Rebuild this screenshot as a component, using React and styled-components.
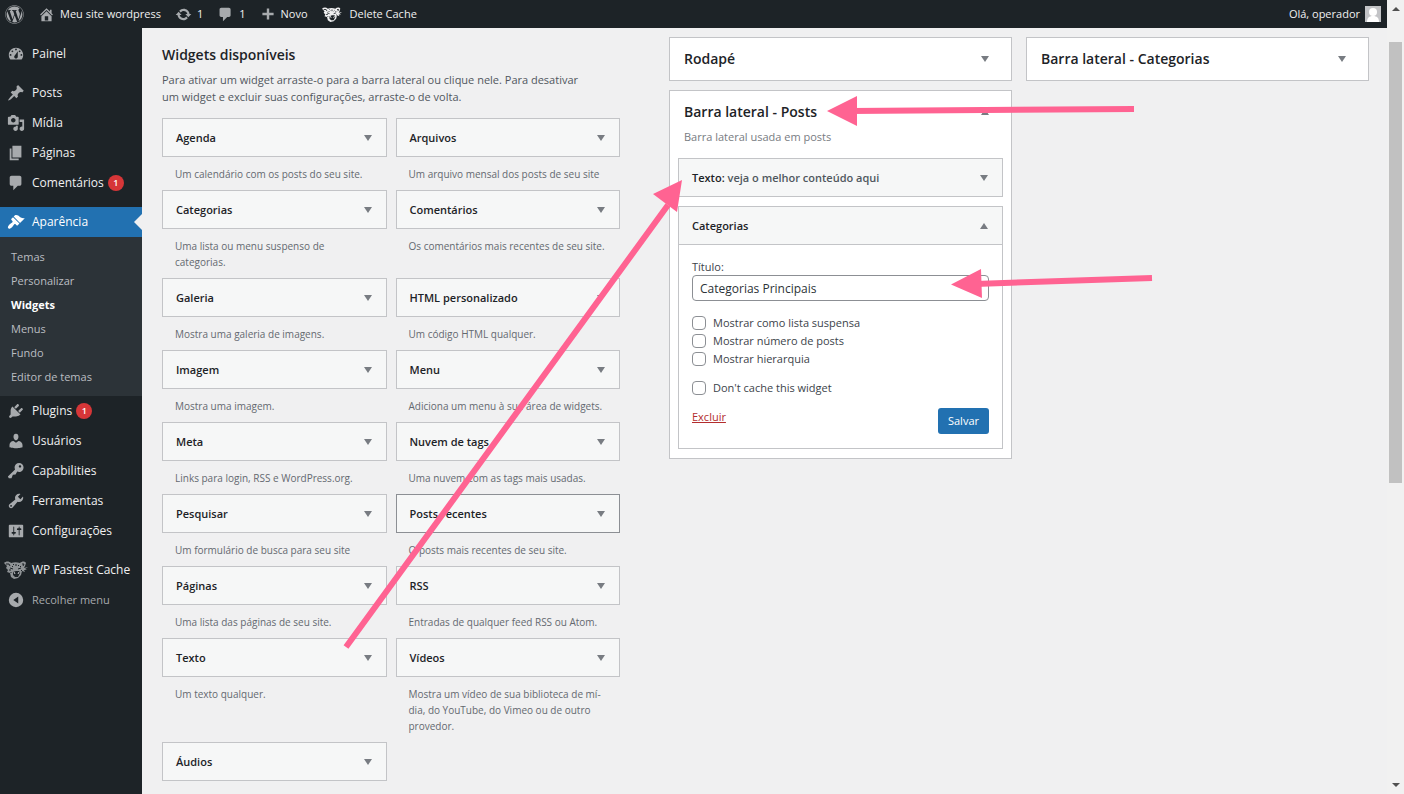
import React, { useState } from 'react';
import styled, { createGlobalStyle, css } from 'styled-components';
import { FaWordpress } from 'react-icons/fa';

const GlobalStyle = createGlobalStyle`
  * {
    box-sizing: border-box;
  }
  body {
    margin: 0;
    background: #f0f0f1;
    color: #3c434a;
    font-family: 'Open Sans', 'Noto Sans', sans-serif;
    font-size: 12px;
    line-height: 16px;
  }
  h2, h3, p, ul {
    margin: 0;
    padding: 0;
  }
  ul {
    list-style: none;
  }
  a {
    color: inherit;
    text-decoration: none;
  }
  button, input {
    font: inherit;
  }
`;

const paths = {
  home: 'M16 8.5l1.53 1.53-1.06 1.06L10 4.6l-6.47 6.49-1.06-1.06L10 2.5l4 4v-2h2v4zm-6-2.46l6 5.99V18H4v-5.97zM12 17v-5H8v5h4z',
  update: 'M10.2 3.28c3.53 0 6.43 2.61 6.92 6h2.08l-3.5 4-3.5-4h2.32c-.45-1.97-2.21-3.45-4.32-3.45-1.45 0-2.73.71-3.54 1.78L4.95 5.66C6.23 4.2 8.11 3.28 10.2 3.28zm-.4 13.44c-3.52 0-6.43-2.61-6.92-6H.8l3.5-4c1.17 1.33 2.33 2.67 3.5 4H5.48c.45 1.97 2.21 3.45 4.32 3.45 1.45 0 2.73-.71 3.54-1.78l1.71 1.95c-1.28 1.46-3.15 2.38-5.25 2.38z',
  comments: 'M5 2h9c1.1 0 2 .9 2 2v7c0 1.1-.9 2-2 2h-2l-5 5v-5H5c-1.1 0-2-.9-2-2V4c0-1.1.9-2 2-2z',
  plus: 'M17 8.500v3h-5.500v5.500h-3v-5.500H3v-3h5.500V3h3v5.500z',
  dashboard: 'M3.76 16h12.48c1.1-1.37 1.76-3.11 1.76-5 0-4.42-3.58-8-8-8s-8 3.58-8 8c0 1.89.66 3.63 1.76 5zM10 4c.55 0 1 .45 1 1s-.45 1-1 1-1-.45-1-1 .45-1 1-1zM6 6c.55 0 1 .45 1 1s-.45 1-1 1-1-.45-1-1 .45-1 1-1zm8 0c.55 0 1 .45 1 1s-.45 1-1 1-1-.45-1-1 .45-1 1-1zm-5.37 5.55L12 7v6c0 1.1-.9 2-2 2s-2-.9-2-2c0-.57.24-1.08.63-1.45zM4 10c.55 0 1 .45 1 1s-.45 1-1 1-1-.45-1-1 .45-1 1-1zm12 0c.55 0 1 .45 1 1s-.45 1-1 1-1-.45-1-1 .45-1 1-1z',
  pin: 'M10.44 3.02l1.82-1.82 6.36 6.35-1.83 1.82c-1.05-.68-2.48-.57-3.41.36l-.75.75c-.92.93-1.04 2.35-.35 3.41l-1.83 1.82-2.41-2.41-2.8 2.79c-.42.42-3.38 2.71-3.8 2.29s1.86-3.39 2.28-3.81l2.79-2.79L4.1 9.36l1.83-1.82c1.05.69 2.48.57 3.4-.36l.75-.75c.93-.92 1.05-2.35.36-3.41z',
  media: 'M13 11V4c0-.55-.45-1-1-1h-1.67L9 1H5L3.67 3H2c-.55 0-1 .45-1 1v7c0 .55.45 1 1 1h10c.55 0 1-.45 1-1zM7 4.5c1.38 0 2.5 1.12 2.5 2.5S8.38 9.5 7 9.5 4.5 8.38 4.5 7 5.62 4.5 7 4.5zM14 6h5v10.5c0 1.38-1.12 2.5-2.5 2.5S14 17.88 14 16.5s1.12-2.5 2.5-2.5c.17 0 .34.02.5.05V9h-3V6zm-4 8.05V13h2v3.5c0 1.38-1.12 2.5-2.5 2.5S7 17.88 7 16.5 8.12 14 9.5 14c.17 0 .34.02.5.05z',
  page: 'M6 15V2h10v13H6zm-1 1h8v2H3V5h2v11z',
  brush: 'M14.48 11.06L7.41 3.99l1.5-1.5c.5-.56 2.3-.47 3.51.32 1.21.8 1.43 1.28 2.91 2.1 1.18.64 2.45 1.26 4.45.85zm-.71.71L6.7 4.7 4.93 6.47c-.39.39-.39 1.02 0 1.41l1.06 1.06c.39.39.39 1.03 0 1.42-.6.6-1.43 1.11-2.21 1.69-.35.26-.7.53-1.01.84C1.43 14.23.4 16.08 1.4 17.07c.99 1 2.84-.03 4.18-1.36.31-.31.58-.66.85-1.02.57-.78 1.08-1.61 1.69-2.21.39-.39 1.02-.39 1.41 0l1.06 1.06c.39.39 1.02.39 1.41 0z',
  plug: 'M13.11 4.36L9.87 7.6 8 5.73l3.24-3.24c.35-.34 1.05-.2 1.56.32.52.51.66 1.21.31 1.55zm-8 1.77l.91-1.12 9.01 9.01-1.19.84c-.71.71-2.63 1.16-3.82 1.16H6.14L4.9 17.26c-.59.59-1.54.59-2.12 0-.59-.58-.59-1.53 0-2.12l1.24-1.24v-3.88c0-1.13.4-3.19 1.09-3.89zm7.26 3.97l3.24-3.24c.34-.35 1.04-.21 1.55.31.52.51.66 1.21.31 1.55l-3.24 3.25z',
  user: 'M10 9.25c-2.27 0-2.73-3.44-2.73-3.44C7 4.02 7.82 2 9.97 2c2.16 0 2.98 2.02 2.71 3.81 0 0-.41 3.44-2.68 3.44zm0 2.57L12.72 10c2.39 0 4.52 2.33 4.52 4.53v2.49s-3.65 1.13-7.24 1.13c-3.65 0-7.24-1.13-7.24-1.13v-2.49c0-2.25 1.94-4.48 4.47-4.48z',
  key: 'M16.95 2.58c1.96 1.95 1.96 5.12 0 7.07-1.51 1.51-3.75 1.84-5.59 1.01l-1.87 3.31-2.99.31L5 18H2l-1-2 7.95-7.69c-.92-1.87-.62-4.18.93-5.73 1.95-1.96 5.12-1.96 7.07 0zm-2.51 3.79c.74 0 1.33-.6 1.33-1.34 0-.73-.59-1.33-1.33-1.33-.73 0-1.33.6-1.33 1.33 0 .74.6 1.34 1.33 1.34z',
  wrench: 'M16.68 9.77c-1.34 1.34-3.3 1.67-4.95.99l-5.41 6.52c-.99.99-2.59.99-3.58 0s-.99-2.59 0-3.57l6.52-5.42c-.68-1.65-.35-3.61.99-4.95 1.28-1.28 3.12-1.62 4.72-1.06l-2.89 2.89 2.82 2.82 2.86-2.87c.53 1.58.18 3.39-1.08 4.65zM3.81 16.21c.4.39 1.04.39 1.43 0 .4-.4.4-1.04 0-1.43-.39-.4-1.03-.4-1.43 0-.39.39-.39 1.03 0 1.43z',
  settings: 'M18 16V4c0-.55-.45-1-1-1H3c-.55 0-1 .45-1 1v12c0 .55.45 1 1 1h14c.55 0 1-.45 1-1zM8 11h1c.55 0 1 .45 1 1s-.45 1-1 1H8v1.5c0 .28-.22.5-.5.5s-.5-.22-.5-.5V13H6c-.55 0-1-.45-1-1s.45-1 1-1h1V5.5c0-.28.22-.5.5-.5s.5.22.5.5V11zm5-2h-1c-.55 0-1-.45-1-1s.45-1 1-1h1V5.5c0-.28.22-.5.5-.5s.5.22.5.5V7h1c.55 0 1 .45 1 1s-.45 1-1 1h-1v5.5c0 .28-.22.5-.5.5s-.5-.22-.5-.5V9z',
  collapse: 'M10 2a8 8 0 1 0 0 16a8 8 0 1 0 0-16zM12.500 6v8L7 10z',
};

const Icon = ({ name, size = 18 }) => (
  <svg width={size} height={size} viewBox="0 0 20 20" fill="currentColor" fillRule="evenodd" aria-hidden="true">
    <path d={paths[name]} />
  </svg>
);

const Cheetah = ({ width = 24, bright }) => (
  <svg width={width} height={(width * 18) / 24} viewBox="0 0 24 18" aria-hidden="true">
    <path
      d="M0 2C2 0 5 0 7 2c3-1 6-1 9 0 2-2 5-2 6 0l-1 3-1 2 4-1-3 2 2 1-3 0 1 2-3-1-1 4-3 3-4 1-3-2-1-4-3-1 1-2-2-2 1-2z"
      fill={bright ? '#f0f0f1' : '#8f9396'}
    />
    <path d="M9 11l3-1 3 0 1 2-2 4-3 0-2-2z" fill="#1d2327" />
    <path d="M10 11l1 2M15 11l-1 2" stroke={bright ? '#fff' : '#c3c4c7'} strokeWidth="1" />
    <path
      d="M2 3l3 0 1 2M18 3l2 0-1 2M9 3l1 1M12 3v2M15 4l-1 1M6 7l3 1M14 8l3-1M5 9l2 0M7 11l0 1M18 9l-1 1M8 5l1 1M16 6l1-1"
      stroke="#1d2327"
      strokeWidth="1"
      fill="none"
    />
  </svg>
);

const Window = styled.div`
  position: relative;
  display: flex;
  height: 100vh;
  overflow: hidden;
`;

const Screen = styled.div`
  flex: 1;
  min-width: 0;
  display: flex;
  flex-direction: column;
`;

const TopBar = styled.header`
  flex: none;
  display: flex;
  align-items: center;
  height: 28px;
  padding: 0 6px 0 5px;
  background: #1d2327;
  color: #f0f0f1;
  font-size: 11px;
`;

const TopLink = styled.a`
  display: flex;
  align-items: center;
  gap: ${props => props.$gap || 5}px;
  margin-right: 14px;
  white-space: nowrap;

  svg {
    color: #a7aaad;
  }
`;

const Account = styled(TopLink)`
  margin: 0 0 0 auto;
`;

const Avatar = styled.svg`
  display: block;
  background: #c3c4c7;
`;

const Body = styled.div`
  flex: 1;
  min-height: 0;
  display: flex;
`;

const Sidebar = styled.nav`
  flex: none;
  width: 142px;
  padding-top: 11px;
  background: #1d2327;
  color: #f0f0f1;
`;

const MenuLink = styled.a`
  position: relative;
  display: flex;
  align-items: center;
  gap: 7px;
  height: 30px;
  margin-top: ${props => (props.$spaced ? 9 : 0)}px;
  padding-left: 7px;
  font-size: 12px;
  white-space: nowrap;

  svg {
    flex: none;
    color: #a7aaad;
  }

  ${props => props.$active && css`
    background: #2271b1;
    color: #fff;

    svg {
      color: #fff;
    }

    &::after {
      content: '';
      position: absolute;
      right: 0;
      top: 7px;
      border: 8px solid transparent;
      border-left: 0;
      border-right-color: #f0f0f1;
    }
  `}

  ${props => props.$muted && css`
    color: #a7aaad;
    font-size: 11px;
  `}

  ${props => props.$wide && css`
    padding-left: 4px;
    gap: 4px;
  `}
`;

const Count = styled.span`
  width: 16px;
  height: 16px;
  margin-left: -3px;
  border-radius: 8px;
  background: #d63638;
  color: #fff;
  font-size: 9px;
  font-weight: 600;
  line-height: 16px;
  text-align: center;
`;

const Submenu = styled.ul`
  padding: 8px 0 7px;
  background: #2c3338;
`;

const SubLink = styled.a`
  display: block;
  padding: 0 11px;
  color: ${props => (props.$current ? '#fff' : '#bbbec2')};
  font-size: 11px;
  font-weight: ${props => (props.$current ? 700 : 400)};
  line-height: 24px;
`;

const Content = styled.main`
  flex: 1;
  min-width: 0;
  display: grid;
  grid-template-columns: minmax(0, 458fr) minmax(0, 700fr);
  align-items: start;
  gap: 49px;
  padding: 9px 18px 0 20px;
`;

const Title = styled.h2`
  margin-top: 8px;
  color: #1d2327;
  font-size: 14px;
  font-weight: 600;
  line-height: 20px;
`;

const Intro = styled.p`
  max-width: 425px;
  margin: 6px 0 13px;
  color: #50575e;
  font-size: 11px;
  line-height: 17px;
`;

const WidgetGrid = styled.div`
  display: grid;
  grid-template-columns: 1fr 1fr;
  column-gap: 9px;
`;

const WidgetHead = styled.button`
  display: flex;
  align-items: center;
  justify-content: space-between;
  width: 100%;
  height: 39px;
  padding: 0 14px 0 13px;
  border: 1px solid ${props => (props.$focus ? '#8c8f94' : '#c3c4c7')};
  background: #f6f7f7;
  color: #1d2327;
  font-size: 11px;
  font-weight: 600;
  text-align: left;
  cursor: pointer;

  span {
    color: #50575e;
  }
`;

const WidgetText = styled.p`
  padding: 9px 13px 8px;
  color: #646970;
  font-size: 10px;
  line-height: 16px;
`;

const Caret = styled.i`
  flex: none;
  border: 4px solid transparent;
  border-top: 6px solid #787c82;
  border-bottom: 0;
  transform: ${props => (props.$open ? 'rotate(180deg)' : 'none')};
`;

const Areas = styled.div`
  display: grid;
  grid-template-columns: 1fr 1fr;
  align-items: start;
  gap: 14px;
`;

const AreaColumn = styled.div`
  display: flex;
  flex-direction: column;
  gap: 9px;
`;

const Area = styled.section`
  padding: 0 8px;
  border: 1px solid #c3c4c7;
  background: #fff;
`;

const AreaHead = styled.button`
  display: flex;
  align-items: center;
  justify-content: space-between;
  width: 100%;
  height: 42px;
  padding: 0 14px 0 6px;
  border: 0;
  background: none;
  color: #1d2327;
  font-size: 14px;
  font-weight: 600;
  cursor: pointer;
`;

const AreaText = styled.p`
  margin-top: -4px;
  padding: 0 6px 13px;
  color: #787c82;
  font-size: 11px;
  line-height: 16px;
`;

const WidgetList = styled.div`
  display: flex;
  flex-direction: column;
  gap: 9px;
  padding-bottom: 9px;
`;

const WidgetForm = styled.form`
  padding: 14px 13px;
  border: 1px solid #c3c4c7;
  border-top: 0;
  font-size: 11px;
`;

const FieldLabel = styled.label`
  display: block;
  line-height: 16px;
`;

const TextInput = styled.input`
  display: block;
  width: 100%;
  height: 26px;
  margin-bottom: 13px;
  padding: 0 7px;
  border: 1px solid #8c8f94;
  border-radius: 4px;
  background: #fff;
  color: #2c3338;
  font-size: 12px;
`;

const CheckLabel = styled.label`
  display: flex;
  align-items: center;
  gap: 7px;
  height: 18px;
  margin-top: ${props => (props.$spaced ? 11 : 0)}px;
`;

const CheckBox = styled.input`
  appearance: none;
  width: 14px;
  height: 14px;
  margin: 0;
  border: 1px solid #8c8f94;
  border-radius: 4px;
  background: #fff;

  &:checked {
    background: #2271b1;
  }
`;

const Actions = styled.div`
  display: flex;
  justify-content: space-between;
  margin-top: 11px;
`;

const DeleteLink = styled.a`
  color: #b32d2e;
  line-height: 18px;
  text-decoration: underline;
`;

const SaveButton = styled.button`
  height: 26px;
  padding: 0 10px;
  border: 0;
  border-radius: 3px;
  background: #2271b1;
  color: #fff;
  cursor: pointer;
`;

const Scrollbar = styled.div`
  flex: none;
  display: flex;
  flex-direction: column;
  align-items: center;
  width: 17px;
  padding: 7px 0;
  background: #f1f1f1;
`;

const ScrollArrow = styled.i`
  border: 4px solid transparent;
  border-top: 4px solid #505050;
  border-bottom: 0;
  transform: ${props => (props.$up ? 'rotate(180deg)' : 'none')};
`;

const Track = styled.div`
  flex: 1;
  display: grid;
  grid-template-rows: 22fr 15fr;
  width: 13px;
  padding-top: 31px;
`;

const Thumb = styled.div`
  background: #c1c1c1;
`;

const Annotations = styled.svg`
  position: absolute;
  top: 0;
  left: 0;
  pointer-events: none;
`;

const submenu = ['Temas', 'Personalizar', 'Widgets', 'Menus', 'Fundo', 'Editor de temas'];

const widgets = [
  { name: 'Agenda', text: 'Um calendário com os posts do seu site.' },
  { name: 'Arquivos', text: 'Um arquivo mensal dos posts de seu site' },
  { name: 'Categorias', text: 'Uma lista ou menu suspenso de categorias.' },
  { name: 'Comentários', text: 'Os comentários mais recentes de seu site.' },
  { name: 'Galeria', text: 'Mostra uma galeria de imagens.' },
  { name: 'HTML personalizado', text: 'Um código HTML qualquer.' },
  { name: 'Imagem', text: 'Mostra uma imagem.' },
  { name: 'Menu', text: 'Adiciona um menu à sua área de widgets.' },
  { name: 'Meta', text: 'Links para login, RSS e WordPress.org.' },
  { name: 'Nuvem de tags', text: 'Uma nuvem com as tags mais usadas.' },
  { name: 'Pesquisar', text: 'Um formulário de busca para seu site' },
  { name: 'Posts recentes', text: 'O posts mais recentes de seu site.', focus: true },
  { name: 'Páginas', text: 'Uma lista das páginas de seu site.' },
  { name: 'RSS', text: 'Entradas de qualquer feed RSS ou Atom.' },
  { name: 'Texto', text: 'Um texto qualquer.' },
  { name: 'Vídeos', text: 'Mostra um vídeo de sua biblioteca de mí\u00ADdia, do YouTube, do Vimeo ou de outro provedor.' },
  { name: 'Áudios', text: 'Mostra um reprodutor de áudio.' },
];

const options = [
  { label: 'Mostrar como lista suspensa' },
  { label: 'Mostrar número de posts' },
  { label: 'Mostrar hierarquia' },
  { label: "Don't cache this widget", spaced: true },
];

const Menu = () => (
  <Sidebar>
    <MenuLink href="#"><Icon name="dashboard" />Painel</MenuLink>
    <MenuLink href="#" $spaced><Icon name="pin" />Posts</MenuLink>
    <MenuLink href="#"><Icon name="media" />Mídia</MenuLink>
    <MenuLink href="#"><Icon name="page" />Páginas</MenuLink>
    <MenuLink href="#"><Icon name="comments" />Comentários<Count>1</Count></MenuLink>
    <MenuLink href="#" $spaced $active><Icon name="brush" />Aparência</MenuLink>
    <Submenu>
      {submenu.map(item => (
        <li key={item}>
          <SubLink href="#" $current={item === 'Widgets'}>{item}</SubLink>
        </li>
      ))}
    </Submenu>
    <MenuLink href="#"><Icon name="plug" />Plugins<Count>1</Count></MenuLink>
    <MenuLink href="#"><Icon name="user" />Usuários</MenuLink>
    <MenuLink href="#"><Icon name="key" />Capabilities</MenuLink>
    <MenuLink href="#"><Icon name="wrench" />Ferramentas</MenuLink>
    <MenuLink href="#"><Icon name="settings" />Configurações</MenuLink>
    <MenuLink href="#" $spaced $wide><Cheetah />WP Fastest Cache</MenuLink>
    <MenuLink href="#" $muted><Icon name="collapse" />Recolher menu</MenuLink>
  </Sidebar>
);

const CategoryWidget = () => {
  const [title, setTitle] = useState('Categorias Principais');

  return (
    <div>
      <WidgetHead type="button">Categorias<Caret $open /></WidgetHead>
      <WidgetForm onSubmit={e => e.preventDefault()}>
        <FieldLabel htmlFor="widget-title">Título:</FieldLabel>
        <TextInput id="widget-title" type="text" value={title} onChange={e => setTitle(e.target.value)} />
        {options.map(option => (
          <CheckLabel key={option.label} $spaced={option.spaced}>
            <CheckBox type="checkbox" />
            {option.label}
          </CheckLabel>
        ))}
        <Actions>
          <DeleteLink href="#">Excluir</DeleteLink>
          <SaveButton type="submit">Salvar</SaveButton>
        </Actions>
      </WidgetForm>
    </div>
  );
};

const App = () => {
  return (
    <Window>
      <GlobalStyle />
      <Screen>
        <TopBar>
          <TopLink href="#" aria-label="WordPress"><FaWordpress size={19} /></TopLink>
          <TopLink href="#"><Icon name="home" size={17} />Meu site wordpress</TopLink>
          <TopLink href="#"><Icon name="update" size={17} />1</TopLink>
          <TopLink href="#"><Icon name="comments" size={17} />1</TopLink>
          <TopLink href="#"><Icon name="plus" size={16} />Novo</TopLink>
          <TopLink href="#" $gap={8}><Cheetah width={20} bright />Delete Cache</TopLink>
          <Account href="#">
            Olá, operador
            <Avatar width="16" height="16" viewBox="0 0 16 16">
              <circle cx="8" cy="6" r="4" fill="#fff" />
              <path d="M2 16c0-4 2-6 6-6s6 2 6 6z" fill="#fff" />
            </Avatar>
          </Account>
        </TopBar>
        <Body>
          <Menu />
          <Content>
            <section>
              <Title>Widgets disponíveis</Title>
              <Intro>
                Para ativar um widget arraste-o para a barra lateral ou clique nele. Para desativar
                um widget e excluir suas configurações, arraste-o de volta.
              </Intro>
              <WidgetGrid>
                {widgets.map(widget => (
                  <div key={widget.name}>
                    <WidgetHead type="button" $focus={widget.focus}>{widget.name}<Caret /></WidgetHead>
                    <WidgetText>{widget.text}</WidgetText>
                  </div>
                ))}
              </WidgetGrid>
            </section>
            <Areas>
              <AreaColumn>
                <Area>
                  <AreaHead type="button">Rodapé<Caret /></AreaHead>
                </Area>
                <Area>
                  <AreaHead type="button">Barra lateral - Posts<Caret $open /></AreaHead>
                  <AreaText>Barra lateral usada em posts</AreaText>
                  <WidgetList>
                    <WidgetHead type="button">
                      <div>Texto: <span>veja o melhor conteúdo aqui</span></div>
                      <Caret />
                    </WidgetHead>
                    <CategoryWidget />
                  </WidgetList>
                </Area>
              </AreaColumn>
              <Area>
                <AreaHead type="button">Barra lateral - Categorias<Caret /></AreaHead>
              </Area>
            </Areas>
          </Content>
        </Body>
      </Screen>
      <Scrollbar>
        <ScrollArrow $up />
        <Track><Thumb /></Track>
        <ScrollArrow />
      </Scrollbar>
      <Annotations width="1404" height="794" viewBox="0 0 1404 794" fill="#ff6392" stroke="none" aria-hidden="true">
        <path d="M1134 109L850 111M1152 278L975 284M346 647L668 205" stroke="#ff6392" strokeWidth="6" />
        <path d="M827 111L857 96v30zM951 284.500L981 269l1 29zM682 180l-29 14 24 18z" />
      </Annotations>
    </Window>
  );
};

export default App;
